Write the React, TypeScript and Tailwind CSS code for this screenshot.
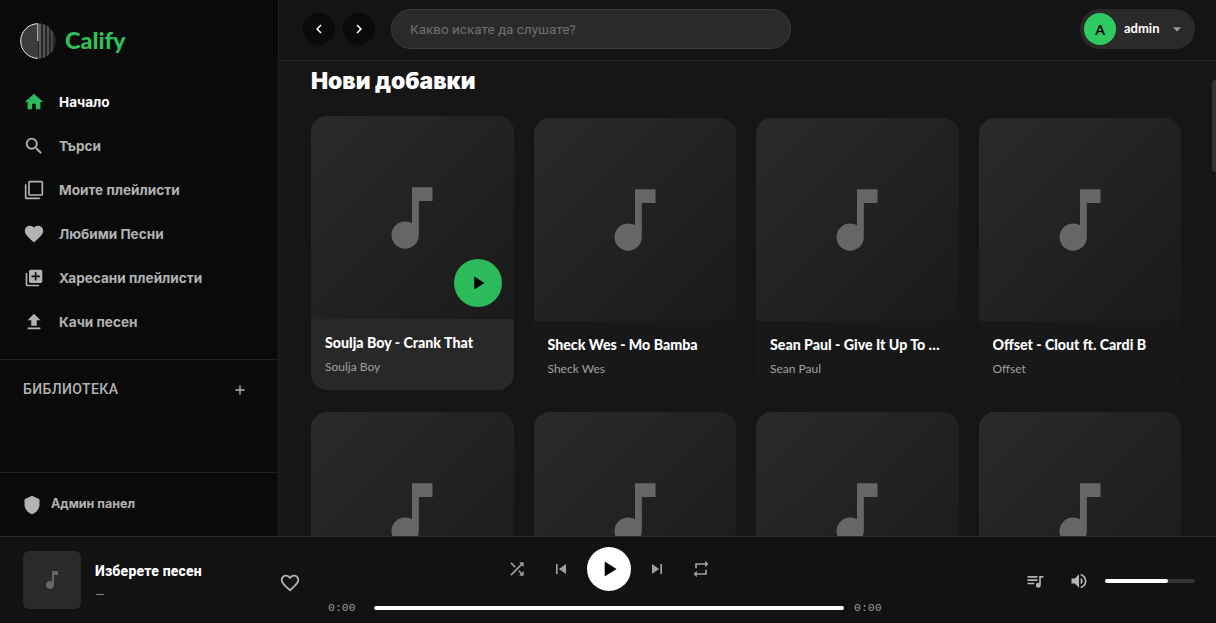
import {
  MdAdd,
  MdArrowDropDown,
  MdChevronLeft,
  MdChevronRight,
  MdFavorite,
  MdFavoriteBorder,
  MdFileUpload,
  MdFilterNone,
  MdHome,
  MdLibraryAdd,
  MdMusicNote,
  MdPlayArrow,
  MdQueueMusic,
  MdRepeat,
  MdSearch,
  MdShield,
  MdShuffle,
  MdSkipNext,
  MdSkipPrevious,
  MdVolumeUp,
} from 'react-icons/md';

const navItems = [
  { label: 'Начало', icon: MdHome, size: 22, active: true },
  { label: 'Търси', icon: MdSearch, size: 22 },
  { label: 'Моите плейлисти', icon: MdFilterNone, size: 20 },
  { label: 'Любими Песни', icon: MdFavorite, size: 22 },
  { label: 'Харесани плейлисти', icon: MdLibraryAdd, size: 20 },
  { label: 'Качи песен', icon: MdFileUpload, size: 22 },
];

const songs = [
  { title: 'Soulja Boy - Crank That', artist: 'Soulja Boy', hovered: true },
  { title: 'Sheck Wes - Mo Bamba', artist: 'Sheck Wes' },
  { title: 'Sean Paul - Give It Up To Me', artist: 'Sean Paul' },
  { title: 'Offset - Clout ft. Cardi B', artist: 'Offset' },
  { title: 'Drake - Nonstop', artist: 'Drake' },
  { title: 'Travis Scott - Sicko Mode', artist: 'Travis Scott' },
  { title: 'Migos - Bad and Boujee', artist: 'Migos' },
  { title: 'Future - Mask Off', artist: 'Future' },
];

function Logo() {
  return (
    <svg width="36" height="36" viewBox="0 0 36 36" className="shrink-0">
      <defs>
        <clipPath id="logo-clip">
          <circle cx="18" cy="18" r="17.5" />
        </clipPath>
      </defs>
      <circle cx="18" cy="18" r="17.5" fill="#3c3c3c" />
      <g clipPath="url(#logo-clip)">
        <rect x="18" y="0" width="18" height="36" fill="#262626" />
        <rect x="19" y="0" width="2" height="36" fill="#5a5a5a" />
        <rect x="23" y="0" width="2" height="36" fill="#555" />
        <rect x="27" y="0" width="2" height="36" fill="#505050" />
        <rect x="31" y="0" width="2" height="36" fill="#484848" />
      </g>
      <path d="M18 .7A17.3 17.3 0 0 0 18 35.3" fill="none" stroke="#e8e8e8" strokeWidth="1" />
      <rect x="17" y="1" width="1.4" height="17" fill="#aaa" />
    </svg>
  );
}

function Sidebar() {
  return (
    <aside className="flex w-[279px] shrink-0 flex-col border-r border-[#222] bg-[#0a0a0a]">
      <div className="flex h-[80px] items-center gap-[9px] pl-5 pt-[2px]">
        <Logo />
        <span className="font-['Lato'] text-[23.5px] font-black leading-none text-[#2fbf5c]">Calify</span>
      </div>
      <nav className="flex flex-col pl-[23px]">
        {navItems.map(({ label, icon: Icon, size, active }) => (
          <div key={label} className="flex h-[44px] items-center gap-[14px]">
            <span className="flex w-[22px] justify-center">
              <Icon size={size} className={active ? 'text-[#2dba5a]' : 'text-[#b3b3b3]'} />
            </span>
            <span className={`font-['Inter'] text-[13.6px] font-bold ${active ? 'text-white' : 'text-[#b3b3b3]'}`}>
              {label}
            </span>
          </div>
        ))}
      </nav>
      <div className="mt-[15px] flex h-[113px] border-t border-[#222] pl-[23px] pr-[30px] pt-[19px]">
        <div className="flex h-5 w-full items-center justify-between">
          <span className="text-[14px] font-medium tracking-[0.4px] text-[#b3b3b3]">БИБЛИОТЕКА</span>
          <MdAdd size={16} className="mt-[2px] text-[#b3b3b3]" />
        </div>
      </div>
      <div className="flex flex-1 items-center gap-[9px] border-t border-[#222] pl-[22px]">
        <MdShield size={20} className="text-[#b3b3b3]" />
        <span className="font-['Inter'] text-[12.5px] font-bold text-[#b3b3b3]">Админ панел</span>
      </div>
    </aside>
  );
}

function TopBar() {
  return (
    <header className="flex h-[61px] shrink-0 items-center border-b border-[#222] bg-[#141414] pb-[2px] pl-6 pr-[21px]">
      <div className="flex gap-2">
        <button className="flex h-8 w-8 items-center justify-center rounded-full bg-[#0a0a0a] text-white">
          <MdChevronLeft size={18} />
        </button>
        <button className="flex h-8 w-8 items-center justify-center rounded-full bg-[#0a0a0a] text-white">
          <MdChevronRight size={18} />
        </button>
      </div>
      <div className="ml-4 flex h-10 w-[400px] items-center rounded-full border border-[#3c3c3c] bg-[#2a2a2a] pl-[18px] text-[13.5px] text-[#707070]">
        Какво искате да слушате?
      </div>
      <div className="ml-auto flex h-10 w-[115px] items-center rounded-full bg-[#2a2a2a] pl-1">
        <div className="flex h-8 w-8 items-center justify-center rounded-full bg-[#2fca62] font-['Lato'] text-[14px] font-bold text-black">
          A
        </div>
        <span className="ml-2 font-['Lato'] text-[13px] font-bold text-white">admin</span>
        <MdArrowDropDown size={20} className="ml-[7px] text-[#999]" />
      </div>
    </header>
  );
}

function SongCard({ title, artist, hovered }: { title: string; artist: string; hovered?: boolean }) {
  return (
    <div
      className={`overflow-hidden rounded-2xl ${hovered ? '-translate-y-[2px] bg-[#282828]' : 'bg-[#181818]'}`}
    >
      <div className="relative flex aspect-square items-center justify-center bg-gradient-to-br from-[#2a2a2a] to-[#1a1a1a]">
        <MdMusicNote size={82} className="mt-[2px] text-[#666]" />
        {hovered && (
          <div className="absolute bottom-3 right-3 flex h-12 w-12 items-center justify-center rounded-full bg-[#2dba5a] text-black">
            <MdPlayArrow size={22} />
          </div>
        )}
      </div>
      <div className="px-[14px] pb-[14px] pt-[14px] font-['Lato']">
        <div className="truncate text-[14.2px] font-black leading-[20px] text-white">{title}</div>
        <div className="mt-[5px] truncate text-[12px] leading-[18px] text-[#a0a0a0]">{artist}</div>
      </div>
    </div>
  );
}

function Player() {
  return (
    <footer className="flex h-[87px] shrink-0 items-center border-t border-[#2a2a2a] bg-[#121212]">
      <div className="flex w-[328px] shrink-0 items-center pl-[23px]">
        <div className="flex h-[58px] w-[58px] items-center justify-center rounded-md bg-[#2a2a2a]">
          <MdMusicNote size={24} className="text-[#666]" />
        </div>
        <div className="ml-[14px] w-[184px] pt-[4px]">
          <div className="text-[14px] font-extrabold tracking-[0.2px] text-white">Изберете песен</div>
          <div className="mt-[4px] text-[12px] text-[#888]">—</div>
        </div>
        <MdFavoriteBorder size={22} className="mt-[6px] text-[#b3b3b3]" />
      </div>
      <div className="flex w-[560px] shrink-0 flex-col items-center pt-[3px]">
        <div className="ml-[2px] flex items-center text-[#a0a0a0]">
          <MdShuffle size={20} />
          <MdSkipPrevious size={20} className="ml-6" />
          <button className="mx-4 flex h-11 w-11 items-center justify-center rounded-full bg-white text-black">
            <MdPlayArrow size={26} />
          </button>
          <MdSkipNext size={20} />
          <MdRepeat size={20} className="ml-6" />
        </div>
        <div className="mt-[9px] flex w-full items-center font-['Liberation_Mono'] text-[11.5px] leading-4 text-[#9a9a9a]">
          <span className="w-[46px]">0:00</span>
          <div className="h-1 w-[470px] rounded-full bg-white" />
          <span className="ml-[10px]">0:00</span>
        </div>
      </div>
      <div className="ml-auto flex items-center pr-[21px] pt-[2px] text-[#b3b3b3]">
        <MdQueueMusic size={20} />
        <MdVolumeUp size={20} className="ml-[24px]" />
        <div className="ml-4 h-1 w-[90px] rounded-full bg-[#333]">
          <div className="h-1 w-[63px] rounded-full bg-white" />
        </div>
      </div>
    </footer>
  );
}

export default function App() {
  return (
    <div className="flex h-[623px] w-[1216px] flex-col overflow-hidden bg-[#141414] font-['Roboto',sans-serif]">
      <div className="flex min-h-0 flex-1">
        <Sidebar />
        <main className="relative flex min-w-0 flex-1 flex-col">
          <TopBar />
          <div className="min-h-0 flex-1 overflow-hidden bg-[#161616] pl-8 pr-[35px]">
            <h2 className="mt-[5px] font-['Inter'] text-[22.8px] font-black leading-[30px] text-white">
              Нови добавки
            </h2>
            <div className="mt-[22px] grid grid-cols-4 gap-5">
              {songs.map((song) => (
                <SongCard key={song.title} {...song} />
              ))}
            </div>
          </div>
          <div className="absolute right-0 top-[80px] h-[92px] w-1 rounded-l bg-[#333]" />
        </main>
      </div>
      <Player />
    </div>
  );
}
